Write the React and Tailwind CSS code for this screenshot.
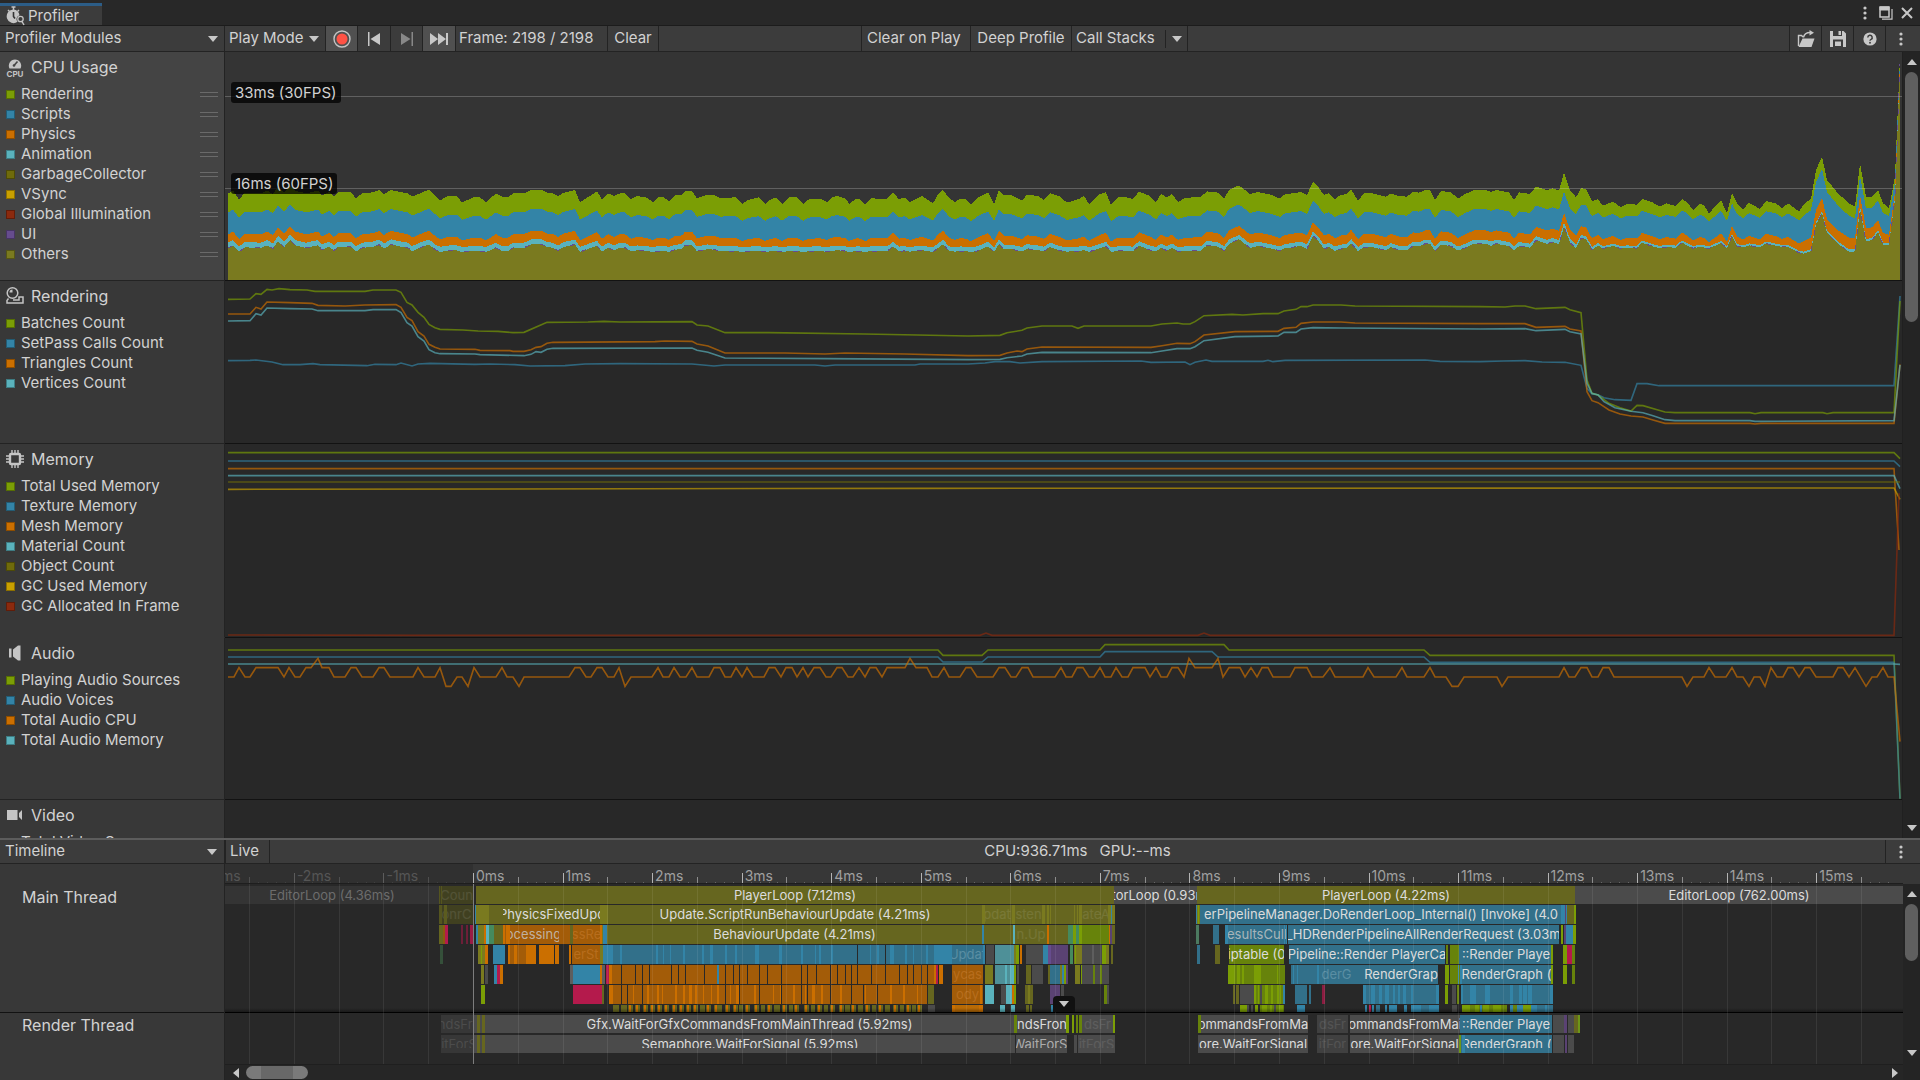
import React from 'react';
import clsx from 'clsx';

const COLORS = {
  green: '#7b9e05',
  blue: '#3384a7',
  orange: '#cb6f00',
  cyan: '#5ab2bc',
  gc: '#6f6b0b',
  yellow: '#c9a000',
  red: '#8b2a0e',
  purple: '#664c8e',
  olive: '#7a7a1f',
};

const CHART_W = 1677;

// Chart coordinates: x in frame-strip pixels, y in thirds of a pixel
const CPU_TOP = [
  [3, 580], [8, 572], [14, 598], [20, 578], [36, 580], [42, 572], [48, 582], [53, 560], [59, 578], [65, 556], [70, 572], [81, 580], [93, 572], [97, 586],
  [104, 576], [109, 588], [113, 577], [126, 577], [131, 595], [137, 580], [148, 577], [154, 570], [159, 582], [166, 570], [177, 577], [183, 580],
  [187, 590], [199, 575], [204, 570], [210, 585], [215, 602], [221, 590], [226, 587], [232, 588], [237, 608], [248, 592], [255, 592], [261, 607],
  [271, 580], [277, 590], [283, 592], [288, 580], [299, 580], [306, 570], [316, 569], [322, 578], [328, 580], [333, 588], [339, 578], [350, 570],
  [355, 607], [372, 574], [377, 598], [383, 580], [389, 588], [395, 580], [400, 580], [406, 598], [412, 588], [421, 592], [428, 606], [433, 592],
  [439, 592], [444, 604], [450, 586], [457, 584], [460, 573], [467, 573], [472, 595], [482, 585], [490, 586], [495, 594], [511, 592], [517, 612],
  [523, 600], [534, 592], [540, 612], [545, 600], [551, 592], [557, 612], [564, 592], [572, 592], [578, 612], [584, 598], [595, 596], [602, 606],
  [607, 592], [612, 588], [621, 596], [624, 612], [631, 596], [635, 597], [640, 614], [646, 595], [662, 597], [668, 577], [674, 598], [679, 592],
  [685, 606], [697, 588], [702, 598], [708, 610], [713, 582], [718, 570], [724, 594], [730, 606], [735, 596], [741, 598], [746, 614], [752, 594],
  [763, 577], [769, 612], [774, 570], [779, 586], [787, 586], [797, 602], [802, 584], [813, 588], [819, 600], [825, 579], [835, 590], [842, 608],
  [854, 597], [859, 588], [864, 612], [874, 584], [881, 577], [886, 615], [893, 592], [901, 592], [908, 597], [914, 575], [925, 588], [931, 607],
  [936, 582], [942, 592], [947, 582], [953, 606], [960, 594], [976, 590], [982, 574], [993, 578], [999, 596], [1004, 570], [1014, 556], [1025, 582],
  [1033, 576], [1046, 584], [1055, 596], [1059, 584], [1076, 576], [1082, 585], [1088, 545], [1093, 560], [1099, 585], [1104, 580], [1110, 597],
  [1115, 586], [1122, 582], [1126, 568], [1133, 602], [1139, 580], [1147, 580], [1161, 590], [1166, 580], [1173, 588], [1182, 590], [1188, 576],
  [1194, 578], [1200, 570], [1205, 570], [1210, 600], [1216, 573], [1226, 577], [1233, 596], [1239, 584], [1249, 570], [1261, 570], [1266, 576],
  [1271, 570], [1284, 577], [1289, 600], [1294, 577], [1305, 582], [1311, 560], [1322, 570], [1328, 565], [1334, 572], [1339, 518], [1345, 570],
  [1351, 592], [1356, 564], [1361, 568], [1367, 604], [1373, 598], [1378, 617], [1388, 605], [1396, 622], [1402, 611], [1412, 614], [1417, 597],
  [1428, 608], [1435, 620], [1441, 610], [1451, 618], [1457, 597], [1462, 606], [1468, 630], [1475, 611], [1479, 616], [1484, 640], [1496, 600],
  [1502, 640], [1507, 578], [1512, 610], [1518, 628], [1524, 608], [1535, 627], [1541, 603], [1551, 610], [1557, 625], [1563, 610], [1574, 634],
  [1579, 612], [1586, 596], [1591, 510], [1597, 470], [1602, 540], [1613, 580], [1624, 610], [1630, 620], [1635, 490], [1641, 590], [1647, 590],
  [1653, 570], [1658, 610], [1664, 624], [1670, 530], [1675, 170],
];

// Thickness of each stacked band at a few frames: x, rendering, scripts, physics, animation
const CPU_BANDS = [
  [0, 57, 66, 25, 16],
  [1339, 57, 64, 28, 12],
  [1367, 45, 66, 26, 8],
  [1378, 37, 66, 23, 7],
  [1560, 30, 68, 23, 6],
  [1597, 37, 87, 40, 6],
  [1602, 36, 82, 35, 6],
  [1635, 38, 58, 34, 8],
  [1664, 27, 60, 28, 5],
  [1675, 6, 8, 6, 2],
];

function bandsAt(x) {
  let i = 0;
  while (i < CPU_BANDS.length - 2 && CPU_BANDS[i + 1][0] < x) i++;
  const a = CPU_BANDS[i];
  const b = CPU_BANDS[i + 1];
  const t = (x - a[0]) / (b[0] - a[0]);
  return [1, 2, 3, 4].map((k) => a[k] + (b[k] - a[k]) * t);
}

// Quiet frames squeeze the bands, "Others" stays nearly level
const CPU_STACK = CPU_TOP.map(([x, y]) => {
  const [g, b, o, c] = bandsAt(x);
  const squeeze = Math.max(0, y - (x < 1367 ? 590 : 612));
  const scripts = y + g - squeeze * 0.3;
  const physics = scripts + b - squeeze * 0.2;
  const animation = physics + o - squeeze * 0.35;
  return { x, layers: [y, scripts, physics, animation, animation + c] };
});

const layerPoints = (k) => CPU_STACK.map((p) => `${p.x},${p.layers[k].toFixed(1)}`).join(' ');

const RENDERING_LINES = [
  {
    color: COLORS.blue,
    points: '3,242 25,241 31,240 47,246 58,254 75,254 88,251 95,254 142,257 150,253 171,254 176,249 187,258 193,252 205,250 250,253 265,252 290,254 305,258 340,257 360,252 395,251 467,252 489,258 500,255 590,255 600,258 610,255 690,255 695,252 743,252 760,249 770,245 785,245 795,249 817,245 916,243 926,247 960,246 965,254 970,247 981,240 987,244 1038,244 1043,241 1048,245 1060,241 1200,240 1215,244 1255,245 1278,243 1300,242 1317,246 1340,247 1356,256 1362,325 1367,342 1373,344 1379,353 1390,359 1406,361 1412,311 1422,311 1434,317 1669,317 1675,48',
  },
  {
    color: COLORS.green,
    points: '3,58 25,57 31,41 36,43 42,28 47,30 54,26 65,29 82,30 90,34 140,34 148,30 171,30 176,37 182,67 187,75 193,97 199,112 204,133 210,143 215,148 238,150 253,153 273,154 288,158 299,157 322,127 363,126 379,124 395,126 467,125 472,135 483,138 500,158 544,158 639,162 692,165 743,168 775,166 782,158 797,151 802,144 817,138 847,138 853,145 859,138 926,138 937,132 952,129 958,132 965,132 970,125 979,107 1007,103 1018,105 1038,101 1053,101 1059,93 1071,88 1076,80 1082,80 1088,75 1116,75 1130,78 1255,80 1280,81 1290,78 1300,78 1311,86 1340,82 1345,89 1356,98 1362,300 1367,340 1373,345 1384,370 1395,383 1406,393 1412,376 1418,377 1433,390 1440,396 1450,398 1525,398 1530,401 1536,398 1598,398 1602,401 1608,398 1669,398 1675,63',
  },
  {
    color: COLORS.orange,
    points: '3,102 25,102 31,82 36,87 42,66 65,68 87,70 93,76 120,78 140,75 171,74 176,82 182,112 187,122 193,155 199,168 204,193 210,202 215,207 250,208 255,211 285,212 288,214 299,214 306,209 311,202 316,200 322,190 328,187 430,185 440,183 467,184 472,192 483,198 500,219 560,219 600,222 620,219 680,222 743,227 775,226 782,219 792,213 797,215 802,207 817,201 926,202 937,197 952,190 965,191 970,185 979,165 1010,155 1053,154 1059,145 1071,142 1076,130 1088,126 1116,126 1130,129 1255,131 1300,131 1311,142 1340,139 1345,147 1356,153 1362,335 1367,362 1373,368 1384,390 1395,402 1406,408 1418,411 1428,420 1440,430 1525,430 1530,432 1536,430 1669,430 1675,253',
  },
  {
    color: COLORS.cyan,
    points: '3,123 25,122 31,101 36,105 42,84 65,86 87,87 93,92 140,92 148,89 171,89 176,98 182,128 187,138 193,170 199,183 204,209 210,218 215,221 250,222 255,224 299,227 306,223 311,215 316,217 322,208 328,205 467,204 472,211 483,217 500,234 600,236 743,239 775,238 782,233 797,228 802,222 817,217 926,218 937,213 952,206 965,206 970,200 979,182 1010,170 1053,168 1059,157 1071,157 1076,147 1088,143 1116,144 1255,147 1300,146 1311,152 1340,148 1345,155 1356,162 1362,310 1367,340 1373,345 1379,365 1390,383 1406,394 1418,398 1428,407 1440,419 1450,422 1525,422 1530,424 1669,422 1675,255',
  },
];

const MEMORY_LINES = [
  { color: COLORS.green, points: '3,518 1669,518 1675,536' },
  { color: COLORS.blue, points: '3,543 1669,543 1675,560' },
  { color: COLORS.orange, points: '3,566 1669,566 1674,810' },
  { color: COLORS.cyan, points: '3,587 1669,587 1675,626' },
  { color: COLORS.gc, points: '3,606 1675,606' },
  { color: COLORS.yellow, points: '3,628 700,625 1669,624 1675,658' },
  { color: COLORS.red, points: '3,1065 200,1066 755,1066 761,1059 767,1066 973,1066 979,1059 985,1066 1669,1066 1674,640' },
];

const AUDIO_LINES = [
  { color: COLORS.green, points: '3,60 713,60 718,76 757,76 763,60 875,60 880,44 999,44 1004,60 1199,60 1205,76 1669,76 1675,506' },
  { color: COLORS.blue, points: '3,81 713,81 718,96 757,96 763,81 875,81 880,65 987,65 993,81 1199,81 1205,97 1669,97 1675,506' },
  { color: COLORS.cyan, points: '3,102 1669,102 1675,103' },
  {
    color: COLORS.orange,
    points: '3,141 9,141 14,113 20,141 25,141 31,113 53,113 59,141 64,113 70,141 75,141 81,113 86,113 93,85 97,113 104,113 109,141 120,141 126,113 131,113 137,141 148,141 154,113 159,113 165,141 188,141 193,113 199,141 210,141 215,113 221,169 226,169 232,141 237,141 243,169 249,113 255,141 271,141 277,113 282,141 288,141 294,169 299,141 344,141 350,113 355,113 361,141 366,141 372,113 377,113 383,141 389,141 394,113 400,169 406,141 427,141 433,113 438,141 444,141 449,113 455,141 461,141 467,113 472,141 484,141 489,113 495,113 500,141 506,141 511,113 517,141 522,113 528,141 539,141 544,113 550,113 556,141 561,113 567,113 572,141 578,113 583,141 589,113 595,113 601,141 606,141 612,113 617,113 623,141 628,141 634,113 640,141 645,113 651,113 657,141 662,113 680,113 685,85 691,113 702,113 707,141 713,141 719,113 724,141 735,141 741,113 746,113 752,141 768,141 774,113 780,113 786,141 791,141 797,113 803,113 808,141 830,141 836,113 841,141 847,141 852,113 858,113 864,141 869,141 875,113 880,141 886,141 891,113 897,141 903,141 908,113 920,113 925,141 931,113 936,141 942,141 947,113 953,113 959,141 964,85 970,113 987,113 993,85 998,141 1004,113 1015,113 1020,141 1026,113 1032,141 1037,113 1043,113 1048,141 1065,141 1070,113 1082,113 1087,141 1098,141 1105,113 1110,141 1138,141 1143,113 1149,141 1171,141 1177,113 1182,141 1199,141 1205,113 1210,141 1221,141 1227,169 1233,169 1239,141 1272,141 1277,169 1283,141 1334,141 1339,113 1344,141 1350,141 1356,113 1362,113 1367,141 1373,141 1378,113 1384,113 1389,141 1457,141 1462,169 1468,141 1479,141 1484,113 1490,141 1501,141 1507,113 1512,141 1518,141 1524,169 1529,141 1535,141 1540,169 1546,113 1552,141 1558,141 1563,113 1568,113 1574,141 1580,113 1585,113 1591,141 1608,141 1613,113 1618,113 1624,141 1630,113 1641,169 1647,141 1652,141 1658,113 1663,141 1669,141 1675,335',
  },
];

const { green, blue, orange, cyan, gc, yellow, red, purple, olive } = COLORS;

const MODULES = [
  {
    name: 'CPU Usage',
    icon: CpuIcon,
    selected: true,
    draggable: true,
    size: 'h-[229px]',
    chart: CpuChart,
    items: [['Rendering', green], ['Scripts', blue], ['Physics', orange], ['Animation', cyan], ['GarbageCollector', gc], ['VSync', yellow], ['Global Illumination', red], ['UI', purple], ['Others', olive]],
  },
  {
    name: 'Rendering',
    icon: RenderingIcon,
    size: 'h-[163px]',
    chart: () => <LineChart viewBox={`0 3 ${CHART_W} 486`} lines={RENDERING_LINES} />,
    items: [['Batches Count', green], ['SetPass Calls Count', blue], ['Triangles Count', orange], ['Vertices Count', cyan]],
  },
  {
    name: 'Memory',
    icon: MemoryIcon,
    size: 'h-[194px]',
    noRule: true,
    chart: () => <LineChart viewBox={`0 492 ${CHART_W} 579`} lines={MEMORY_LINES} />,
    items: [['Total Used Memory', green], ['Texture Memory', blue], ['Mesh Memory', orange], ['Material Count', cyan], ['Object Count', gc], ['GC Used Memory', yellow], ['GC Allocated In Frame', red]],
  },
  {
    name: 'Audio',
    icon: AudioIcon,
    size: 'h-[162px]',
    chart: () => <LineChart viewBox={`0 24 ${CHART_W} 483`} lines={AUDIO_LINES} />,
    items: [['Playing Audio Sources', green], ['Audio Voices', blue], ['Total Audio CPU', orange], ['Total Audio Memory', cyan]],
  },
  {
    name: 'Video',
    icon: VideoIcon,
    size: 'h-[162px]',
    chart: () => null,
    items: [['Total Video Sources', green]],
  },
];

/* ---------- timeline data ---------- */

const TL_W = 1678;
const ZERO = 248;
const MS = 89.55;

const O = '#66661f'; // player loop
const OL = '#7a7a1f';
const B = '#32708a';
const BL = '#3384a7';
const R = '#a35c08';
const RL = '#cb6f00';
const G = '#67830b';
const GL = '#7b9e05';
const C = '#4e9098';
const CL = '#5ab2bc';
const K = '#4b4b4b';
const KL = '#5e5e5e';
const M = '#b41a4c';
const P = '#5a4273';
const T = '#458a5e';
const BG = '#282828';

// Turns "x width" pairs into thin stripes of one colour
const stripes = (color, list) => list.map(([x, w]) => [x, x + w, color]);
const gaps = (list) => list.map((x) => [x, x + 1, BG]);

const SCRIPT_GAPS = [396, 410, 417, 424, 446, 453, 460, 479, 500, 508, 514, 522, 534, 542, 556, 576, 582, 591, 605, 612, 620, 626, 632, 646, 660, 674, 682, 688, 696, 702];

// [start, end, colour, label, label tone]
const MAIN_LANES = [
  [
    [0, 214, '#343434', 'EditorLoop (4.36ms)', 'dim'],
    [214, 249, '#404020', 'Coun', 'faint'],
    [214, 215, '#55551f'], [216, 217, '#55551f'],
    [251, 889, O, 'PlayerLoop (7.12ms)'],
    [889, 972, K, 'EditorLoop (0.93ms)'],
    [972, 1350, O, 'PlayerLoop (4.22ms)'],
    [1350, 1678, K, 'EditorLoop (762.00ms)'],
  ],
  [
    [214, 249, '#404020', 'onrC', 'faint'],
    [214, 217, '#55551f'], [219, 222, '#5c5c1f'],
    [250, 264, OL], [264, 278, O], [250, 251, BL],
    [278, 376, O, 'PhysicsFixedUpd'], [375, 383, OL],
    [383, 757, O, 'Update.ScriptRunBehaviourUpdate (4.21ms)'],
    [757, 787, '#6a6a20', 'pdat', 'faint'], [757, 760, OL], [787, 820, O, 'sten', 'faint'], [787, 790, OL],
    [817, 820, OL], [820, 857, O], [822, 824, OL], [825, 826, OL], [849, 850, OL], [852, 853, OL], [854, 858, OL],
    [857, 885, O, 'ateA', 'faint'], [883, 890, OL], [886, 887, BL],
    [971, 975, OL], [971, 972, BL], [973, 974, GL],
    [975, 1337, B, 'erPipelineManager.DoRenderLoop_Internal() [Invoke] (4.0'],
    [1336, 1340, BL], [1340, 1341, P], [1341, 1342, BL], [1342, 1349, O], [1349, 1351, GL],
  ],
  [
    [214, 218, O], [218, 220, '#8a5a10'], [220, 223, M], [236, 238, '#6d1f38'], [241, 243, '#6d1f38'], [245, 249, '#9a1c44'],
    [251, 253, BL], [253, 259, OL], [259, 261, RL], [261, 264, CL], [264, 269, T], [269, 278, O], [278, 283, RL], [280, 281, R],
    [283, 345, R], [283, 334, R, 'ocessing', 'soft'], [283, 285, RL], [345, 348, O],
    [348, 375, R, 'ssRe', 'warm'], [375, 377, RL], [377, 378, OL], [378, 382, BL],
    [382, 757, O, 'BehaviourUpdate (4.21ms)'],
    [757, 759, BL], [759, 788, O], [788, 790, CL], [790, 822, O, 'n.Up', 'faint'], [822, 824, RL], [824, 843, O],
    [843, 848, T], [848, 851, GL], [851, 854, T], [854, 857, GL], [857, 884, G], [884, 885, RL], [885, 887, P], [887, 890, O],
    [971, 974, '#4c7a60'], [988, 994, B], [1000, 1003, BL], [1003, 1061, B, 'esultsCull', 'soft'], [1059, 1060, BL], [1061, 1062, BL],
    [1063, 1334, B, '_HDRenderPipelineAllRenderRequest (3.03m'],
    [1336, 1338, GL], [1339, 1341, P], [1341, 1348, BL], [1348, 1351, GL],
  ],
  [
    [215, 218, '#35503a'],
    [253, 260, OL], [256, 257, GL], [260, 263, RL], [268, 280, BL], [283, 311, RL], [285, 289, R], [292, 301, R], [314, 329, RL], [330, 334, RL],
    [344, 346, RL], [347, 375, R, 'erSt', 'warm'], [375, 378, OL], [378, 388, BL], [388, 760, B],
    ...stripes(BL, [[395, 2], [431, 2], [438, 1], [445, 1], [458, 2], [477, 2], [485, 3], [500, 2], [510, 2], [530, 4], [554, 3], [576, 2], [590, 1], [594, 2], [606, 2], [645, 1], [652, 2], [665, 4], [680, 2], [688, 1], [701, 2], [709, 18]]),
    ...gaps([632, 660]),
    [727, 758, B, 'Updat', 'cool'], [758, 760, BL],
    [761, 769, K], [770, 789, C], [789, 791, OL], [791, 794, GL], [795, 797, RL],
    [801, 818, K], [818, 823, BL], [823, 826, purple], [826, 843, P], [845, 848, T], [849, 857, OL], [850, 851, GL], [857, 877, K], [867, 869, KL],
    [877, 881, GL], [881, 884, OL], [886, 888, O],
    [972, 975, B], [990, 995, O], [1004, 1059, G, 'iptable (0'], [1064, 1220, B, 'Pipeline::Render PlayerCa'],
    [1221, 1223, G], [1225, 1234, G], [1234, 1328, B, '::Render Playe'], [1326, 1328, GL], [1338, 1342, GL], [1342, 1347, M], [1347, 1350, G],
  ],
  [
    [256, 259, OL], [260, 263, K], [269, 272, BL], [272, 275, M], [275, 278, RL],
    [345, 348, KL], [348, 375, BL], [375, 377, RL], [377, 380, KL], [381, 384, M], [384, 387, RL], [387, 709, R],
    ...gaps(SCRIPT_GAPS), [492, 494, BL], [709, 711, RL], [711, 713, M], [714, 718, RL],
    [727, 758, R, 'ycas', 'warm'],
    [760, 768, OL], [770, 785, C], [780, 782, CL], [785, 789, CL], [789, 791, GL], [792, 794, K], [801, 806, O], [807, 818, K],
    [823, 825, O], [825, 835, B], [835, 837, OL], [837, 839, BL], [839, 841, GL], [841, 843, P],
    [850, 855, OL], [856, 884, K], [856, 857, GL], [868, 870, G], [875, 877, G],
    [1003, 1060, G], [1003, 1010, GL], [1012, 1015, GL], [1017, 1019, GL], [1029, 1036, GL], [1052, 1053, GL],
    [1066, 1213, B], [1068, 1069, BL], [1072, 1073, BL], [1092, 1094, BL], [1095, 1128, B, 'derG', 'cool'], [1139, 1213, B, 'RenderGrap'],
    [1220, 1224, GL], [1225, 1235, G], [1233, 1234, BL], [1235, 1328, B, 'RenderGraph ('], [1235, 1237, BL], [1326, 1328, GL], [1338, 1342, GL], [1347, 1350, G],
  ],
  [
    [256, 260, GL], [348, 377, M], [377, 379, O], [384, 702, R], [384, 388, RL],
    ...stripes(RL, [[408, 1], [422, 2], [432, 2], [437, 1], [450, 2], [458, 2], [464, 3], [470, 2], [478, 1], [486, 1], [492, 2], [505, 1], [511, 3], [529, 2], [548, 1], [555, 2], [568, 2], [580, 1], [587, 3], [596, 2], [615, 2], [640, 1], [665, 2], [678, 2], [692, 1]]),
    ...gaps([396, 402, 417, 500, 514, 534, 556, 576, 582, 605, 626, 638, 652, 702]),
    [703, 709, O], [727, 758, R, 'ody', 'warm'], [755, 757, RL],
    [760, 769, CL], [776, 781, K], [781, 787, CL], [787, 789, RL], [789, 791, GL], [800, 808, O], [803, 805, OL],
    [825, 835, P], [836, 839, K], [879, 882, G], [882, 884, K],
    [1008, 1010, O], [1011, 1014, O], [1015, 1029, K], [1029, 1058, G],
    ...stripes(GL, [[1029, 2], [1033, 1], [1040, 3], [1046, 2], [1052, 2], [1055, 1]]), [1035, 1037, K], [1058, 1060, BL],
    [1070, 1082, B], [1084, 1086, B], [1097, 1100, '#8b1c40'],
    [1138, 1214, B], ...stripes(BL, [[1138, 3], [1146, 4], [1154, 3], [1160, 4], [1168, 2], [1173, 2], [1178, 3], [1186, 2], [1211, 3]]),
    [1220, 1223, GL], [1227, 1231, K], [1232, 1234, G],
    [1236, 1328, B], ...stripes(BL, [[1236, 2], [1245, 6], [1260, 5], [1285, 3], [1294, 3], [1298, 4], [1303, 4], [1325, 3]]),
  ],
  [
    [388, 394, O], [396, 402, O],
    ...[403, 410, 418, 425, 432, 439, 447, 454, 461, 468, 481, 489, 500, 508, 520, 529, 542, 557, 569, 579, 592, 605, 614, 626, 640, 653, 668, 681, 692].flatMap((x) => [[x, x + 5, O], [x + 1, x + 3, RL]]),
    ...stripes(O, [[475, 5], [494, 3], [514, 4], [536, 4], [549, 6], [564, 4], [586, 4], [599, 4], [620, 5], [633, 5], [647, 4], [660, 5], [675, 4], [687, 4]]),
    [703, 710, K], [727, 758, RL], [730, 754, '#b86a05'], [775, 780, CL], [786, 790, CL], [801, 804, O], [805, 807, O], [826, 828, BL],
    [1015, 1022, GL], [1022, 1024, K], [1026, 1028, K], [1030, 1033, GL], [1035, 1059, G], [1037, 1042, GL], [1045, 1047, GL], [1049, 1051, K], [1054, 1058, GL],
    [1072, 1080, BL], [1140, 1142, BL], [1144, 1146, M], [1147, 1149, BL], [1151, 1155, B], [1160, 1162, BL], [1164, 1172, BL], [1179, 1182, BL], [1186, 1214, BL], [1196, 1204, B],
    [1227, 1232, K], [1237, 1282, G], [1237, 1245, GL], [1250, 1254, GL], [1258, 1264, GL], [1268, 1276, GL], [1255, 1257, BL], [1285, 1298, BL], [1288, 1292, G],
    [1298, 1306, GL], [1306, 1312, BL], [1312, 1328, B], [1320, 1322, BL],
  ],
];

const RENDER_LANES = [
  [
    [216, 252, '#373737', 'ndsFro', 'dimmer'],
    [249, 789, K], [260, 789, K, 'Gfx.WaitForGfxCommandsFromMainThread (5.92ms)'], [252, 255, O], [257, 260, O],
    [789, 792, G], [792, 842, K, 'ndsFron'], [841, 844, GL], [847, 849, GL], [851, 853, G], [854, 857, G],
    [857, 888, K, 'dsFr', 'faint'], [888, 890, GL],
    [973, 976, G], [976, 1083, K, 'ommandsFromMai'], [1092, 1123, '#404040', 'dsFr', 'faint'],
    [1125, 1235, K, 'ommandsFromMai'], [1235, 1327, B, '::Render Playe'],
    [1328, 1339, K], [1339, 1342, P], [1343, 1349, K], [1349, 1353, O], [1353, 1355, '#6d9618'],
  ],
  [
    [216, 252, '#373737', 'itForS', 'dimmer'],
    [249, 790, K], [260, 790, K, 'Semaphore.WaitForSignal (5.92ms)'], [252, 255, O], [257, 260, O],
    [791, 842, K, 'WaitForSi', 'soft'], [849, 852, K], [853, 890, K, 'itForS', 'faint'],
    [973, 1083, K, 'ore.WaitForSignal'], [1092, 1123, '#404040', 'itFor', 'faint'], [1125, 1234, K, 'ore.WaitForSignal'],
    [1234, 1236, '#6d9618'], [1236, 1327, B, 'RenderGraph ('], [1237, 1240, BL],
    [1328, 1339, K], [1340, 1342, P], [1343, 1349, K],
  ],
];

const TONES = {
  dim: 'text-[#6c6c6c]',
  dimmer: 'text-[#4c4c4c]',
  faint: 'text-white/10',
  warm: 'text-[#c67a2c]/60',
  cool: 'text-[#5a8ea3]',
  soft: 'text-[#c8c8c8]/80',
};

const pct = (v) => `${(v / TL_W) * 100}%`;

/* ---------- icons ---------- */

function ProfilerIcon() {
  return (
    <svg className="h-5 w-5 shrink-0" viewBox="0 0 20 20" fill="none" aria-hidden="true">
      <path d="M5.5 1h4M7.5 1v3M2 4l1.5 1.5M13 4l-1.5 1.5" stroke="#c4c4c4" strokeWidth="1.5" />
      <path d="M7.500 3.500a6.800 6.800 0 1 0 4 12.300 4 4 0 0 1 2-6.500A6.800 6.800 0 0 0 7.500 3.500z" fill="#c4c4c4" />
      <path d="M7.500 6v4.500l1.500 2" stroke="#333" strokeWidth="1.600" />
      <circle cx="14.500" cy="13" r="2.700" stroke="#c4c4c4" strokeWidth="1.300" />
      <path d="M16 15.500l2 3.500" stroke="#c4c4c4" strokeWidth="1.500" />
    </svg>
  );
}

function CpuIcon() {
  return (
    <svg className="h-5 w-5 shrink-0" viewBox="0 0 20 20" aria-hidden="true">
      <path d="M4.500 11.500a6.200 6.200 0 1 1 11 0z" fill="#c4c4c4" />
      <path d="M9 8.500l3.500-4" stroke="#444" strokeWidth="1.600" />
      <circle cx="9" cy="8.500" r="1.300" fill="#444" />
      <text x="10" y="19.500" textAnchor="middle" fontSize="8" fontWeight="700" fontFamily="Inter, sans-serif" fill="#c4c4c4">CPU</text>
    </svg>
  );
}

function RenderingIcon() {
  return (
    <svg className="h-5 w-5 shrink-0" viewBox="0 0 20 20" fill="none" stroke="#c4c4c4" aria-hidden="true">
      <circle cx="7.500" cy="7" r="5.300" strokeWidth="1.500" />
      <path d="M4.500 6.500a3 3 0 0 1 3-3v3z" fill="#c4c4c4" stroke="none" />
      <path d="M3.500 12.500l-1.500 2v2.500h16V11h-4v3H8" strokeWidth="1.500" />
    </svg>
  );
}

function MemoryIcon() {
  return (
    <svg className="h-5 w-5 shrink-0" viewBox="0 0 20 20" fill="none" stroke="#c4c4c4" aria-hidden="true">
      <rect x="5" y="5" width="10" height="10" rx="1" strokeWidth="2.400" />
      <path d="M7 4V1M10 4V1M13 4V1M7 19v-3M10 19v-3M13 19v-3M4 7H1M4 10H1M4 13H1M19 7h-3M19 10h-3M19 13h-3" strokeWidth="1.400" />
    </svg>
  );
}

function AudioIcon() {
  return (
    <svg className="h-5 w-5 shrink-0" viewBox="0 0 20 20" fill="#c4c4c4" aria-hidden="true">
      <path d="M4 5.500h2.500v9H4zM8 6.500L13 2.500h2.500v15H13L8 13.500z" />
    </svg>
  );
}

function VideoIcon() {
  return (
    <svg className="h-5 w-5 shrink-0" viewBox="0 0 20 20" fill="#c4c4c4" aria-hidden="true">
      <path d="M2 5h10.500v10H2zM14 8l3-3v10l-3-3z" />
    </svg>
  );
}

function Arrow({ dir = 'down', className }) {
  const paths = { down: 'M0 1h10L5 7z', up: 'M0 7h10L5 1z', left: 'M7 0v10L1 5z', right: 'M3 0v10l6-5z' };
  return (
    <svg className={clsx('shrink-0', dir === 'down' || dir === 'up' ? 'h-2 w-2.5' : 'h-2.5 w-2.5', className)} viewBox={dir === 'down' || dir === 'up' ? '0 0 10 8' : '0 0 10 10'} fill="#c8c8c8" aria-hidden="true">
      <path d={paths[dir]} />
    </svg>
  );
}

function Kebab() {
  return (
    <svg className="h-3.5 w-1" viewBox="0 0 4 14" fill="#c8c8c8" aria-hidden="true">
      <circle cx="2" cy="2" r="1.600" />
      <circle cx="2" cy="7" r="1.600" />
      <circle cx="2" cy="12" r="1.600" />
    </svg>
  );
}

/* ---------- toolbar ---------- */

function ToolButton({ label, active, spread, className, children }) {
  return (
    <button
      type="button"
      aria-label={label}
      className={clsx('flex h-full shrink-0 items-center border-r border-[#232323] whitespace-nowrap', spread ? 'justify-between' : 'justify-center', active && 'bg-[#505050]', className)}
    >
      {children}
    </button>
  );
}

function TitleBar() {
  return (
    <div className="flex h-[26px] shrink-0 items-end justify-between border-b border-[#1c1c1c] bg-[#282828]">
      <div role="tab" aria-selected="true" className="flex h-[22px] w-[102px] items-center gap-0.5 border-t-3 border-[#2c5d87] bg-[#3c3c3c] pl-1.5 text-[15px] leading-5">
        <ProfilerIcon />
        Profiler
      </div>
      <div className="flex h-6 items-center gap-2 pr-[7px]">
        <button type="button" aria-label="Tab menu" className="flex w-3 justify-center"><Kebab /></button>
        <button type="button" aria-label="Maximize">
          <svg className="h-3.5 w-3.5" viewBox="0 0 14 14" fill="none" stroke="#c8c8c8" aria-hidden="true">
            <path d="M1 1h9v10H1z" strokeWidth="1.500" />
            <path d="M1 1h9v3H1z" fill="#c8c8c8" />
            <path d="M3 13.200h10V3" strokeWidth="1.200" />
          </svg>
        </button>
        <button type="button" aria-label="Close">
          <svg className="h-3 w-3" viewBox="0 0 12 12" stroke="#c8c8c8" strokeWidth="2" aria-hidden="true">
            <path d="M1 1l10 10M11 1L1 11" />
          </svg>
        </button>
      </div>
    </div>
  );
}

function Toolbar() {
  return (
    <div className="flex h-[26px] shrink-0 items-stretch border-b border-[#232323] bg-[#3c3c3c] text-[15px]">
      <ToolButton spread className="w-[225px] pr-1.5 pl-[5px]">
        Profiler Modules
        <Arrow />
      </ToolButton>
      <ToolButton spread className="w-[101px] pr-1.5 pl-1">
        Play Mode
        <Arrow />
      </ToolButton>
      <ToolButton label="Record" active className="w-8">
        <svg className="h-[18px] w-[18px]" viewBox="0 0 18 18" aria-hidden="true">
          <circle cx="9" cy="9" r="8" fill="none" stroke="#c4c4c4" strokeWidth="1.400" />
          <circle cx="9" cy="9" r="5.500" fill="#ff5245" />
        </svg>
      </ToolButton>
      <ToolButton label="Previous frame" className="w-[33px]">
        <svg className="h-3.5 w-3.5" viewBox="0 0 14 14" fill="#c8c8c8" aria-hidden="true"><path d="M1 0h1.500v14H1zM13 1v12L3.500 7z" /></svg>
      </ToolButton>
      <ToolButton label="Next frame" className="w-8">
        <svg className="h-3.5 w-3.5" viewBox="0 0 14 14" fill="#888" aria-hidden="true"><path d="M11.500 0H13v14h-1.500zM1 1v12l9.500-6z" /></svg>
      </ToolButton>
      <ToolButton label="Current frame" active className="w-[33px]">
        <svg className="h-3.5 w-5" viewBox="0 0 20 14" fill="#c8c8c8" aria-hidden="true"><path d="M1 1v12l8-6zM9 1v12l8-6zM17 1h2v12h-2z" /></svg>
      </ToolButton>
      <span className="flex w-[152px] shrink-0 items-center border-r border-[#232323] pl-[3px] whitespace-nowrap">Frame: 2198 / 2198</span>
      <ToolButton className="w-[51px]">Clear</ToolButton>
      <div className="w-[203px] shrink-0 border-r border-[#232323]" />
      <ToolButton spread className="w-[109px] pl-[5px]">Clear on Play</ToolButton>
      <ToolButton className="w-[101px]">Deep Profile</ToolButton>
      <ToolButton spread className="w-[116px] pr-[5px] pl-1">
        Call Stacks
        <span className="flex h-[18px] items-center border-l border-[#232323] pl-1.5"><Arrow /></span>
      </ToolButton>
      <div className="min-w-0 flex-1 border-r border-[#232323]" />
      <ToolButton label="Load" className="w-8">
        <svg className="h-[18px] w-[18px]" viewBox="0 0 18 18" fill="none" stroke="#c8c8c8" aria-hidden="true">
          <path d="M1.500 16V5.500h3l1.500 1.500" strokeWidth="1.400" />
          <path d="M1.500 17l4-8.500h12L14.500 17z" fill="#c8c8c8" stroke="none" />
          <path d="M6.500 7.500c.5-3.500 3-5 7-5" strokeWidth="1.500" />
          <path d="M12.500 0l4.500 2.700-4.500 2.700z" fill="#c8c8c8" stroke="none" />
        </svg>
      </ToolButton>
      <ToolButton label="Save" className="w-8">
        <svg className="h-4 w-4" viewBox="0 0 16 16" aria-hidden="true">
          <path fillRule="evenodd" d="M0 0h3v5h9V0h1.500L16 2.500V16H0zM3 8.500V16h10V8.500z" fill="#c8c8c8" />
          <path d="M8.500 0H11v4H8.500zM5 10.500h6V15H5z" fill="#c8c8c8" />
        </svg>
      </ToolButton>
      <ToolButton label="Help" className="w-8">
        <svg className="h-3.5 w-3.5" viewBox="0 0 14 14" aria-hidden="true">
          <circle cx="7" cy="7" r="6.600" fill="#c8c8c8" />
          <path d="M4.800 5.500a2.200 2.200 0 1 1 3.300 1.900c-.8.400-1.100.7-1.100 1.400" fill="none" stroke="#3c3c3c" strokeWidth="1.500" />
          <circle cx="7" cy="10.800" r=".95" fill="#3c3c3c" />
        </svg>
      </ToolButton>
      <button type="button" aria-label="Profiler menu" className="flex w-[34px] shrink-0 items-center justify-center pr-1"><Kebab /></button>
    </div>
  );
}

/* ---------- charts ---------- */

function CpuChart() {
  const fills = [green, blue, orange, cyan, olive];
  return (
    <div className="relative h-full">
      <svg className="block h-full w-full" viewBox={`0 156 ${CHART_W} 684`} preserveAspectRatio="none" shapeRendering="crispEdges" aria-hidden="true">
        {fills.map((fill, k) => (
          <polygon key={fill} fill={fill} points={`3,840 ${layerPoints(k)} 1675,840`} />
        ))}
        <polyline points={layerPoints(4)} fill="none" stroke="#664c8e" strokeDasharray="5 11" vectorEffect="non-scaling-stroke" />
        <path d={`M0 289.500H${CHART_W}M0 565.500H${CHART_W}`} stroke="#fff" strokeOpacity=".22" vectorEffect="non-scaling-stroke" />
      </svg>
      <span className="absolute top-[30px] left-1.5 rounded-[3px] bg-black/75 px-1 pt-px text-[15px] leading-5">33ms (30FPS)</span>
      <span className="absolute top-[121px] left-1.5 rounded-[3px] bg-black/75 px-1 pt-px text-[15px] leading-5">16ms (60FPS)</span>
    </div>
  );
}

function LineChart({ viewBox, lines }) {
  return (
    <svg className="block h-full w-full" viewBox={viewBox} preserveAspectRatio="none" aria-hidden="true">
      {lines.map((line) => (
        <polyline key={line.color} points={line.points} fill="none" stroke={line.color} strokeOpacity=".68" strokeWidth="1.600" vectorEffect="non-scaling-stroke" />
      ))}
    </svg>
  );
}

function Module({ module }) {
  const Icon = module.icon;
  const Chart = module.chart;
  return (
    <section className={clsx('flex shrink-0', module.size)}>
      <div className={clsx('w-[225px] shrink-0 overflow-hidden border-r border-b border-r-[#232323]', module.selected ? 'bg-[#444]' : 'bg-[#383838]', module.noRule ? 'border-b-transparent' : 'border-b-[#232323]')}>
        <h2 className="mb-0.5 flex h-[30px] items-center gap-1.5 pl-[5px] text-base">
          <Icon />
          {module.name}
        </h2>
        <ul className="text-[15px] leading-5">
          {module.items.map(([name, color]) => (
            <li key={name} className="flex h-5 items-center pr-1.5 pl-1.5">
              <span className="mr-1.5 h-[9px] w-[9px] border border-black/30" style={{ backgroundColor: color }} />
              {name}
              {module.draggable && <span className="ml-auto h-[5px] w-[18px] border-y border-[#6a6a6a]" />}
            </li>
          ))}
        </ul>
      </div>
      <div className={clsx('min-w-0 flex-1 border-b border-[#121212]', module.selected ? 'bg-[#343434]' : 'bg-[#282828]')}>
        <Chart />
      </div>
    </section>
  );
}

/* ---------- timeline ---------- */

function Ruler() {
  const ticks = [];
  for (let t = -25; t <= 158; t++) {
    ticks.push(t);
  }
  return (
    <div className="relative h-5 overflow-hidden border-b border-[#1e1e1e] bg-[#373737] text-sm">
      {ticks.map((t) => (
        <span
          key={t}
          className={clsx('absolute bottom-0 w-px', t % 10 === 0 ? 'h-2.5 bg-[#b4b4b4]' : t % 5 === 0 ? 'h-1.5 bg-[#8c8c8c]' : 'h-px bg-[#666]')}
          style={{ left: pct(ZERO + (t * MS) / 10) }}
        />
      ))}
      {ticks.filter((t) => t % 10 === 0).map((t) => (
        <span key={t} className="absolute top-0.5 pl-[3px] leading-5 whitespace-nowrap text-[#a0a0a0]" style={{ left: pct(ZERO + (t * MS) / 10) }}>
          {t / 10}ms
        </span>
      ))}
      <span className="absolute top-0.5 left-0 -ml-1 leading-5 text-[#a0a0a0]">ms</span>
      <span className="absolute inset-y-0 left-0 bg-[#2c2c2c]/65" style={{ width: pct(ZERO) }} />
    </div>
  );
}

function Lane({ bars, className, clip }) {
  return (
    <div className={clsx('relative', className)}>
      {bars.map(([from, to, color, label, tone], i) => (
        <div
          key={i}
          className="absolute inset-y-0 flex justify-center overflow-hidden"
          style={{ left: pct(from), width: pct(to - from), backgroundColor: color }}
        >
          {label && (
            <span className={clsx('shrink-0 overflow-hidden leading-[19px] whitespace-nowrap', clip ? 'h-[13px]' : 'h-full', tone ? TONES[tone] : 'text-[#dcdcdc]')}>{label}</span>
          )}
        </div>
      ))}
    </div>
  );
}

function GridLines() {
  const lines = [];
  for (let t = -5; t <= 31; t++) {
    lines.push(t);
  }
  return (
    <div className="pointer-events-none absolute inset-0">
      {lines.map((t) => (
        <span
          key={t}
          className={clsx('absolute inset-y-0 w-px', t === 0 ? 'bg-[#7d7d7d]' : 'bg-white/8')}
          style={{ left: pct(ZERO + (t * MS) / 2) }}
        />
      ))}
    </div>
  );
}

function Timeline() {
  return (
    <div className="flex h-[240px] shrink-0 flex-col">
      <div className="flex h-6 shrink-0 border-b border-[#232323] bg-[#3c3c3c] text-[15px]">
        <ToolButton spread className="w-[226px] border-r-2 pr-[7px] pl-[5px]">
          Timeline
          <Arrow />
        </ToolButton>
        <ToolButton spread className="w-11 pl-1">Live</ToolButton>
        <div className="flex min-w-0 flex-1 items-center justify-center gap-3 border-r border-[#232323]">
          <span>CPU:936.71ms</span>
          <span>GPU:--ms</span>
        </div>
        <button type="button" aria-label="Timeline menu" className="flex w-[34px] items-center justify-center pr-1"><Kebab /></button>
      </div>

      <div className="flex min-h-0 flex-1">
        <div className="w-[225px] shrink-0 border-r border-[#232323] bg-[#383838] text-base">
          <div className="h-[149px] border-b border-[#121212] pt-[21px] pl-[22px] leading-6">Main Thread</div>
          <div className="pl-[22px] leading-6">Render Thread</div>
        </div>

        <div className="flex min-w-0 flex-1 flex-col bg-[#282828]">
          <Ruler />
          <div className="relative h-[180px] overflow-hidden text-[13px]">
            <div className="relative flex h-[129px] flex-col gap-px overflow-hidden border-b border-black pt-0.5">
              {MAIN_LANES.map((bars, i) => (
                <Lane key={i} bars={bars} className={i === 0 ? 'h-[18px] shrink-0' : 'h-[19px] shrink-0'} />
              ))}
              <div className="absolute inset-x-0 bottom-0 h-1 bg-gradient-to-b from-transparent to-black/35" />
              <button type="button" aria-label="Expand thread" className="absolute bottom-0 left-[828px] z-10 flex h-4 w-[22px] items-center justify-center rounded-t bg-[#111]">
                <Arrow />
              </button>
            </div>
            <div className="flex flex-col gap-0.5 pt-0.5">
              {RENDER_LANES.map((bars, i) => (
                <Lane key={i} bars={bars} clip={i === 1} className="h-[18px]" />
              ))}
            </div>
            <GridLines />
          </div>
          <div className="flex flex-1 items-center border-t border-[#1f1f1f] bg-[#262626] pr-1 pl-[7px]">
            <Arrow dir="left" />
            <div className="ml-1 h-[13px] w-[62px] rounded-full border-x-[15px] border-[#7a7a7a] bg-[#686868]" />
            <Arrow dir="right" className="ml-auto" />
          </div>
        </div>

        <div className="flex w-[17px] shrink-0 flex-col items-center bg-[#242424]">
          <div className="mb-[6px] h-5 w-full bg-[#373737]" />
          <Arrow dir="up" />
          <div className="mt-1.5 h-[57px] w-[13px] rounded-full bg-[#5f5f5f]" />
          <Arrow className="mt-auto mb-[23px]" />
        </div>
      </div>
    </div>
  );
}

export default function App() {
  return (
    <main className="flex h-screen min-h-0 flex-col overflow-hidden bg-[#282828] font-[Inter,sans-serif] text-[#d2d2d2]">
      <TitleBar />
      <Toolbar />
      <div className="flex min-h-0 flex-1">
        <div className="flex min-w-0 flex-1 flex-col overflow-hidden">
          {MODULES.map((module) => (
            <Module key={module.name} module={module} />
          ))}
        </div>
        <div className="flex w-[18px] shrink-0 flex-col items-center border-l border-[#202020] bg-[#242424] pt-1.5">
          <Arrow dir="up" />
          <div className="mt-1.5 h-[250px] w-[13px] rounded-full bg-[#5f5f5f]" />
          <Arrow className="mt-auto mb-1.5" />
        </div>
      </div>
      <div className="h-0.5 shrink-0 bg-[#5c5c5c]" />
      <Timeline />
    </main>
  );
}
